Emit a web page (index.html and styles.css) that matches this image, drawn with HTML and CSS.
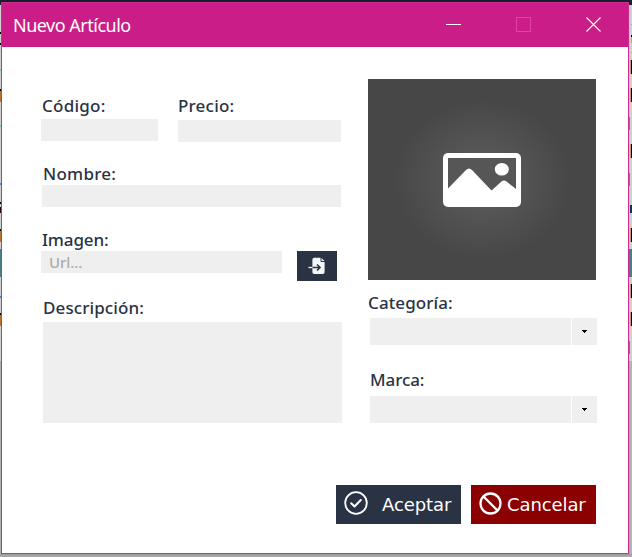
FILE: index.html
```html
<!DOCTYPE html>
<html lang="es">
<head>
<meta charset="utf-8">
<title>Nuevo Artículo</title>
<link rel="stylesheet" href="styles.css">
</head>
<body>
<div class="window">
  <header class="titlebar">
    <h1 class="title">Nuevo Artículo</h1>
    <div class="controls">
      <svg width="16" height="16" viewBox="0 0 16 16"><path d="M0 8.5h15" stroke="#fff"/></svg>
      <svg width="16" height="16" viewBox="0 0 16 16"><rect x="0.5" y="1.5" width="14" height="14" fill="none" stroke="#df43a5"/></svg>
      <svg width="16" height="16" viewBox="0 0 16 16"><path d="M.5 1.5l14 14M14.5 1.5l-14 14" stroke="#fff" stroke-width="1.1"/></svg>
    </div>
  </header>
  <form class="form">
    <div class="column main">
      <div class="pair">
        <div class="field code"><label>Código:</label><div class="input"></div></div>
        <div class="field price"><label>Precio:</label><div class="input"></div></div>
      </div>
      <div class="field name"><label>Nombre:</label><div class="input"></div></div>
      <div class="field image"><label>Imagen:</label>
        <div class="url-row">
          <div class="input"><span class="placeholder">Url...</span></div>
          <div class="import">
            <svg width="18" height="18" viewBox="0 0 18 18"><path fill="#f5f6f7" d="M6.2.8h6.300v3.100q0 1 1 1h3.100v10.300q0 1.800-1.800 1.800H6.200q-1.800 0-1.800-1.800V2.600q0-1.800 1.800-1.800zM13.500.9l3 3h-3z"/><path d="M4.400 10.500h6.500M9 7.500l3 3-3 3" fill="none" stroke="#2a3344" stroke-width="1.600"/><path d="M.5 10.500h4" stroke="#f5f6f7" stroke-width="1.300"/></svg>
          </div>
        </div>
      </div>
      <div class="field description"><label>Descripción:</label><div class="input"></div></div>
    </div>
    <div class="column side">
      <div class="preview">
        <svg width="78" height="54" viewBox="0 0 78 54"><rect width="78" height="54" rx="5" fill="#fff"/><path fill="#565656" d="M5 5h68v31l-9.500-7.500q-2.500-2-5 0L48.500 37.500 29 17q-3-3-6 0L5 35.500z"/><ellipse cx="58.800" cy="16.300" rx="7" ry="6.300" fill="#fff"/></svg>
      </div>
      <div class="field category"><label>Categoría:</label><div class="select"><span class="value"></span><span class="arrow"><svg width="5" height="3" viewBox="0 0 5 3"><path d="M0 0h5v1H4v1H3v1H2V2H1V1H0z"/></svg></span></div></div>
      <div class="field brand"><label>Marca:</label><div class="select"><span class="value"></span><span class="arrow"><svg width="5" height="3" viewBox="0 0 5 3"><path d="M0 0h5v1H4v1H3v1H2V2H1V1H0z"/></svg></span></div></div>
    </div>
  </form>
  <footer class="actions">
    <div class="button accept">
      <svg width="24" height="24" viewBox="0 0 24 24" fill="none" stroke="#fff"><circle cx="12" cy="12" r="10.800" stroke-width="1.800"/><path d="M7.200 12.300l3.300 3.200 6.300-6.500" stroke-width="2" stroke-linecap="round" stroke-linejoin="round"/></svg>
      <span>Aceptar</span>
    </div>
    <div class="button cancel">
      <svg width="24" height="24" viewBox="0 0 24 24" fill="none" stroke="#fff" stroke-width="2.300"><circle cx="11.500" cy="12.500" r="10"/><path d="M4.500 5.500l14 14"/></svg>
      <span>Cancelar</span>
    </div>
  </footer>
</div>
</body>
</html>
```
FILE: styles.css
```css
* { box-sizing: border-box; }

body {
  margin: 0;
  width: 632px;
  height: 557px;
  padding: 2px 0 0 1px;
  overflow: hidden;
  font-family: "Noto Sans", sans-serif;
  color: #2a3344;
  background:
    linear-gradient(#132029 0 5px, transparent 5px) 0 0 / 100% 5px no-repeat,
    linear-gradient(#9c9b9b, #adadac) 0 554px / 100% 3px no-repeat,
    linear-gradient(#d0d0d0 32px, #000 32px 34px, #d0d0d0 34px 43px, #000 43px 45px, #d0d0d0 45px 69px, #83c5d5 69px 71px, #d0d0d0 71px 89px, #000 89px 91px, #bd702e 91px 102px, #d0d0d0 102px 125px, #83c5d5 125px 127px, #d0d0d0 127px 183px, #5080d0 183px 185px, #d0d0d0 185px 202px, #000 202px 204px, #d0d0d0 204px 207px, #300000 207px 213px, #d0d0d0 213px 229px, #000 229px 231px, #bd702e 231px 242px, #d0d0d0 242px 249px, #4b7e85 249px 277px, #d0d0d0 277px 296px, #5080d0 296px 298px, #d0d0d0 298px 313px, #000 313px 315px, #bd702e 315px 326px, #d0d0d0 326px 361px, #b0b0b0 361px) 0 0 / 1px 100% no-repeat,
    linear-gradient(#d0d0d0 24px, #a5a5a5 24px 25px, #d0d0d0 25px 35px, #000 35px 37px, #d9a15e 37px 43px, #d0d0d0 43px 52px, #a5a5a5 52px 53px, #d0d0d0 53px 60px, #000 60px 74px, #d0d0d0 74px 88px, #000 88px 102px, #d0d0d0 102px 144px, #000 144px 158px, #d0d0d0 158px 205px, #153050 205px 213px, #d0d0d0 213px 228px, #000 228px 242px, #d0d0d0 242px 249px, #4b7e85 249px 277px, #d0d0d0 277px 284px, #000 284px 298px, #d0d0d0 298px 312px, #000 312px 326px, #d0d0d0 326px 361px, #b5b5b5 361px) 631px 0 / 1px 100% no-repeat,
    linear-gradient(#d0d0d0 60px, #cf9a60 60px 74px, #d0d0d0 74px 88px, #cf9a60 88px 102px, #d0d0d0 102px 144px, #cf9a60 144px 158px, #d0d0d0 158px 205px, #153050 205px 213px, #d0d0d0 213px 228px, #cf9a60 228px 242px, #d0d0d0 242px 249px, #4b7e85 249px 277px, #d0d0d0 277px 284px, #cf9a60 284px 298px, #d0d0d0 298px 312px, #cf9a60 312px 326px, #d0d0d0 326px 361px, #b5b5b5 361px) 630px 0 / 1px 100% no-repeat,
    linear-gradient(#c9c9c9 117px, #7272c5 117px 130px, #c9c9c9 130px 173px, #7272c5 173px 186px, #c9c9c9 186px 249px, #4b7e85 249px 277px, #c9c9c9 277px 341px, #6378c5 341px 354px, #c9c9c9 354px 361px, #a8a8a8 361px) 629px 0 / 1px 100% no-repeat;
}

.window {
  width: 628px;
  height: 552px;
  border: 1px solid #d12a94;
  background: #fff;
}

.titlebar {
  display: flex;
  justify-content: space-between;
  height: 44px;
  padding: 0 26px 0 11px;
  background: #cb1d88;
}

.title {
  margin: 0;
  font-size: 18px;
  font-weight: 400;
  line-height: 45px;
  letter-spacing: -0.5px;
  color: #fff;
}

.controls {
  display: flex;
  gap: 54px;
  padding-top: 13px;
}

.controls svg { display: block; }

.form {
  display: flex;
  gap: 26px;
  height: 438px;
  padding: 32px 0 0 39px;
}

.main { width: 301px; padding-top: 15px; }
.side { width: 229px; }

label {
  display: block;
  height: 22px;
  padding-left: 1px;
  font-size: 17px;
  font-weight: 500;
  line-height: 24px;
  letter-spacing: 0.1px;
  white-space: nowrap;
}

.input { height: 22px; background: #efefef; }

.pair { display: flex; gap: 20px; height: 68px; }
.code { width: 117px; }
.code label { letter-spacing: 0.25px; }
.code .input { margin-top: 3px; }
.price { width: 163px; }
.price .input { margin-top: 4px; }
.price label { padding-left: 0; letter-spacing: 0.2px; }

.name { height: 66px; padding-left: 1px; }
.name label { letter-spacing: 0.25px; }
.name .input { width: 299px; margin-top: 1px; }

.image { height: 68px; }
.image label { letter-spacing: -0.15px; }
.url-row { display: flex; gap: 15px; margin-top: 1px; }
.url-row .input { width: 241px; padding-left: 8px; }

.placeholder {
  display: block;
  font-size: 15px;
  font-weight: 500;
  line-height: 23px;
  letter-spacing: -0.1px;
  color: #ababab;
}

.import {
  display: flex;
  align-items: center;
  width: 40px;
  height: 30px;
  padding-left: 11px;
  background: #2a3344;
}

.description { padding-left: 2px; }
.description label { padding-left: 0; }
.description .input { width: 299px; height: 101px; margin-top: 4px; }

.preview {
  display: flex;
  justify-content: center;
  width: 228px;
  height: 201px;
  padding-top: 74px;
  background: radial-gradient(ellipse 88px 80px at 50% 50%, #5e5e5e, #535353 50%, #474747);
}

.category { height: 77px; padding-top: 11px; }
.category label { padding-left: 0; }
.category .select { margin-top: 5px; }
.brand { padding-top: 11px; }
.brand label { padding-left: 2px; letter-spacing: -0.1px; }
.brand .select { margin-top: 6px; }

.select {
  display: flex;
  gap: 1px;
  width: 227px;
  height: 27px;
  margin-left: 2px;
}

.value { width: 201px; background: #efefef; }

.arrow {
  display: flex;
  align-items: center;
  justify-content: center;
  width: 25px;
  background: #efefef;
}

.actions {
  display: flex;
  justify-content: flex-end;
  gap: 10px;
  padding-right: 32px;
}

.button {
  display: flex;
  width: 125px;
  height: 39px;
  padding: 6px 0 0 8px;
  font-family: "DejaVu Sans", sans-serif;
  font-size: 18px;
  line-height: 27px;
  letter-spacing: -0.1px;
  color: #fff;
}

.accept { gap: 14px; background: #2a3344; }
.cancel { gap: 4px; background: #8b0000; }
```
